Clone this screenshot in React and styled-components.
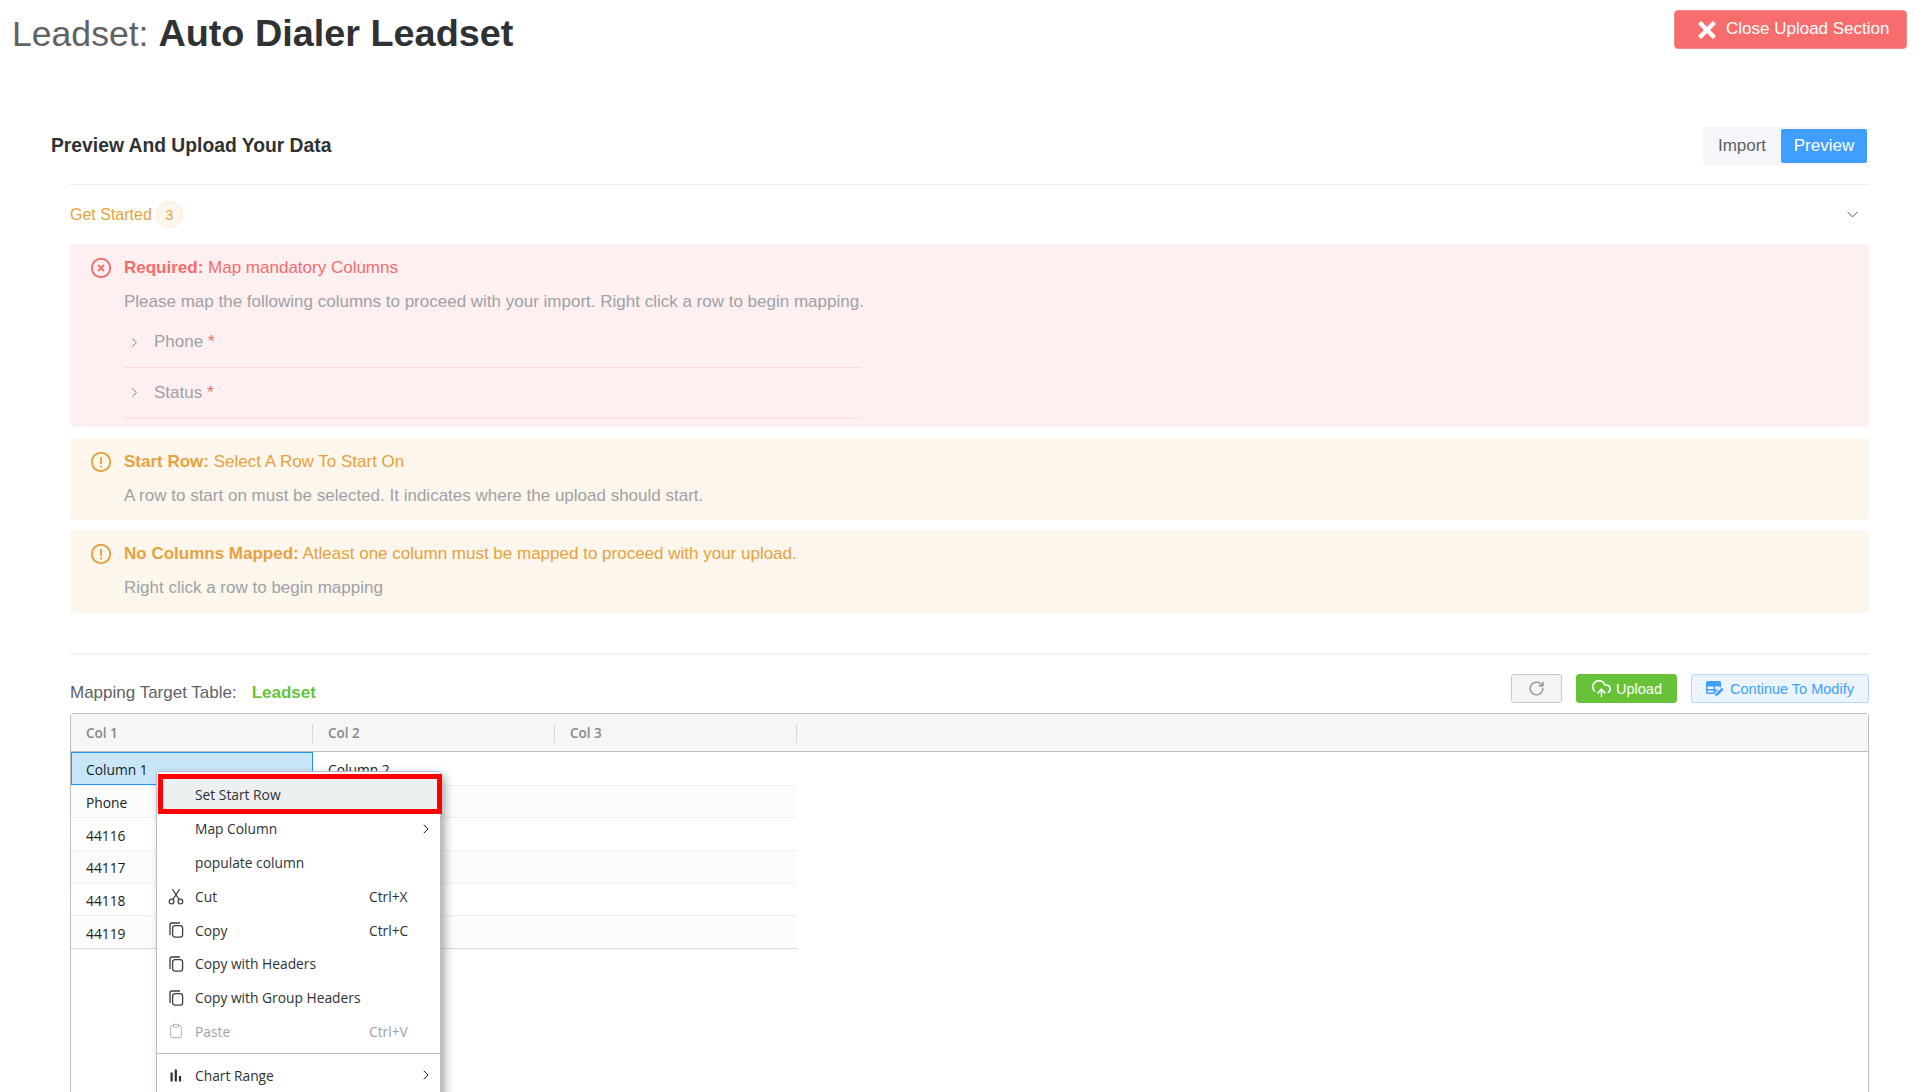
import React from 'react';
import styled, { createGlobalStyle } from 'styled-components';
import { ChevronDown, ChevronRight, CloudUpload, Clipboard, RotateCw } from 'lucide-react';

const GlobalStyle = createGlobalStyle`
  html, body {
    margin: 0;
    padding: 0;
    background: #fff;
    overflow: hidden;
  }
  * {
    box-sizing: border-box;
  }
`;

const TONES = {
  danger: { bg: '#fef0f0', fg: '#f56c6c' },
  warning: { bg: '#fdf6ec', fg: '#e6a23c' },
};

const Page = styled.div`
  width: 1914px;
  height: 1092px;
  overflow: hidden;
  font-family: "Liberation Sans", Arial, sans-serif;
  color: #303133;
`;

const TopBar = styled.header`
  display: flex;
  justify-content: space-between;
  align-items: flex-start;
  height: 127px;
  padding: 11px 7px 0 12px;
`;

const Title = styled.h1`
  margin: 0;
  font-size: 35.6px;
  line-height: 44px;
  font-weight: 400;
  color: #606266;

  strong {
    font-size: 37.8px;
    font-weight: 700;
    color: #303133;
  }
`;

const CloseButton = styled.button`
  display: flex;
  align-items: center;
  gap: 10px;
  width: 233px;
  height: 39px;
  margin-top: -1px;
  padding: 0 0 2px 23px;
  border: 1px solid #f78989;
  border-radius: 4px;
  background: #f76d6d;
  color: #fff;
  font: 17px "Liberation Sans", Arial, sans-serif;

  svg {
    margin-top: 2px;
  }
`;

const Section = styled.section`
  padding: 0 45px 0 51px;
`;

const SectionHead = styled.div`
  display: flex;
  justify-content: space-between;
  align-items: center;
  height: 38px;
  padding-right: 2px;
`;

const SectionTitle = styled.h2`
  margin: 0;
  font-size: 19.3px;
  font-weight: 700;
  color: #303133;
`;

const Toggle = styled.div`
  display: flex;
  align-items: center;
  height: 38px;
  border-radius: 4px;
  background: #f4f6fa;
  padding: 2px 0 2px 0;
`;

const ToggleItem = styled.div`
  display: flex;
  align-items: center;
  justify-content: center;
  height: 34px;
  width: ${p => (p.$active ? 86 : 78)}px;
  border-radius: 2px;
  font-size: 17px;
  background: ${p => (p.$active ? '#409eff' : 'transparent')};
  color: ${p => (p.$active ? '#fff' : '#606266')};
`;

const Body = styled.div`
  margin-left: 19px;
  margin-top: 19px;
  border-top: 1px solid #ebeef5;
`;

const Collapse = styled.div`
  display: flex;
  align-items: center;
  justify-content: space-between;
  height: 59px;
  padding: 0 7px 0 0;
  color: #e6a23c;
  font-size: 16px;
`;

const CollapseLabel = styled.div`
  display: flex;
  align-items: center;
  gap: 4px;
`;

const CountBadge = styled.span`
  display: flex;
  align-items: center;
  justify-content: center;
  width: 27px;
  height: 27px;
  border: 1px solid #faecd8;
  border-radius: 50%;
  background: #fdf6ec;
  font-size: 14px;
`;

const AlertStack = styled.div`
  display: flex;
  flex-direction: column;
  gap: 10.5px;
`;

const Alert = styled.div`
  padding: 12px 0 ${p => p.$pad || 12}px 54px;
  border-radius: 4px;
  background: ${p => TONES[p.$tone].bg};
  color: ${p => TONES[p.$tone].fg};
`;

const AlertTitle = styled.div`
  position: relative;
  height: 24px;
  font-size: 17px;
  line-height: 24px;

  svg {
    position: absolute;
    left: -34px;
    top: 1px;
  }
  b {
    font-weight: 700;
  }
`;

const AlertText = styled.div`
  margin-top: 10px;
  font-size: 17px;
  line-height: 24px;
  color: #a0a1a6;
`;

const MappingList = styled.div`
  width: 737px;
  margin-top: 3px;
`;

const MappingRow = styled.div`
  display: flex;
  align-items: center;
  gap: 12px;
  height: 51px;
  padding: 0 0 0 3px;
  border-bottom: ${p => (p.$last ? 2 : 1)}px solid ${p => (p.$last ? '#fde2e2' : '#fbd9d9')};
  color: #a0a1a6;
  font-size: 17px;

  em {
    font-style: normal;
    color: #f56c6c;
  }
`;

const Rule = styled.div`
  height: 2px;
  margin-top: 40px;
  background: #f1f2f6;
`;

const GridBar = styled.div`
  display: flex;
  align-items: center;
  height: 58px;
  padding-top: 18px;
  font-size: 17px;
  color: #606266;
`;

const TargetName = styled.b`
  margin-left: 15px;
  color: #67c23a;
`;

const BarActions = styled.div`
  display: flex;
  gap: 14px;
  margin-left: auto;
  margin-top: -9px;
`;

const ActionButton = styled.button`
  display: flex;
  align-items: center;
  justify-content: center;
  gap: ${p => p.$gap || 4}px;
  width: ${p => p.$width}px;
  height: 29px;
  padding: 0;
  border-radius: 3px;
  border: 1px solid ${p => p.$border};
  background: ${p => p.$bg};
  color: ${p => p.$color};
  font: 14.5px "Liberation Sans", Arial, sans-serif;
`;

const GridWrap = styled.div`
  position: relative;
`;

const Grid = styled.div`
  height: 500px;
  border: 1px solid #babfc7;
  border-radius: 3px 3px 0 0;
  font-family: "Open Sans", sans-serif;
  font-size: 13.8px;
  color: #181d1f;
`;

const GridHeader = styled.div`
  display: flex;
  height: 38px;
  background: #f5f7f7;
  border-bottom: 1px solid #babfc7;
`;

const HeaderCell = styled.div`
  position: relative;
  display: flex;
  align-items: center;
  width: 242px;
  padding: 1px 0 0 15px;
  font-weight: 600;
  font-size: 13.5px;
  color: #87898a;

  &::after {
    content: '';
    position: absolute;
    right: 0;
    top: 10px;
    height: 19px;
    width: 1px;
    background: #d5d8db;
  }
`;

const Rows = styled.div`
  width: 726px;
  border-bottom: 1px solid #d5d8dd;
`;

const Row = styled.div`
  display: flex;
  height: 32.67px;
  border-top: 1px solid ${p => (p.$first ? 'transparent' : '#eff0f2')};
  background: ${p => (p.$odd ? '#fcfcfd' : '#fff')};
`;

const Cell = styled.div`
  display: flex;
  align-items: center;
  width: 243px;
  padding: 2px 0 0 15px;
`;

const SelectedCell = styled(Cell)`
  width: 242px;
  margin-top: -1px;
  padding: 3px 0 0 14px;
  border: 1px solid #2196f3;
  background: #c9e6f9;
`;

const Menu = styled.div`
  position: absolute;
  left: 86px;
  top: 58px;
  width: 285px;
  padding: 6px 0;
  border: 1px solid #babfc7;
  border-radius: 3px;
  background: #fff;
  box-shadow: 4px 4px 10px rgba(60, 66, 72, 0.45);
  font-family: "Open Sans", sans-serif;
  font-size: 13.8px;
  color: #181d1f;
`;

const MenuItem = styled.div`
  display: flex;
  align-items: center;
  height: 33.8px;
  padding-left: 11px;
  color: ${p => (p.$disabled ? '#9da2a6' : '#2d3236')};
  background: ${p => (p.$active ? '#ecf0f1' : 'transparent')};
`;

const MenuIcon = styled.span`
  display: flex;
  align-items: center;
  justify-content: center;
  width: 16px;
  margin-right: 11px;
`;

const MenuLabel = styled.span`
  flex: 1;
`;

const MenuKey = styled.span`
  width: 71px;
`;

const MenuArrow = styled.span`
  display: flex;
  width: 22px;
`;

const MenuSeparator = styled.div`
  height: 1px;
  margin: 5px 0 4px;
  background: #babfc7;
`;

const RedBox = styled.div`
  position: absolute;
  left: 88px;
  top: 61px;
  width: 284px;
  height: 40px;
  border: 5px solid #f00;
  pointer-events: none;
`;

const CloseIcon = () => (
  <svg width="18" height="18" viewBox="0 0 18 18">
    <path d="M1.5 1.500 16.500 16.500M16.500 1.500 1.500 16.500" stroke="#fff" strokeWidth="4.400" fill="none" />
  </svg>
);

const ErrorIcon = () => (
  <svg width="22" height="22" viewBox="0 0 22 22" fill="none" stroke="#f56c6c">
    <circle cx="11" cy="11" r="9.200" strokeWidth="1.900" />
    <path d="M8 8l6 6M14 8l-6 6" strokeWidth="1.900" />
  </svg>
);

const WarnIcon = () => (
  <svg width="22" height="22" viewBox="0 0 22 22" fill="none" stroke="#e6a23c">
    <circle cx="11" cy="11" r="9.200" strokeWidth="1.900" />
    <path d="M11 6v7M11 14.600v1.800" strokeWidth="1.900" />
  </svg>
);

const ModifyIcon = () => (
  <svg width="18" height="16" viewBox="0 0 18 16" fill="#409eff">
    <path d="M1.500 0h12A1.500 1.500 0 0 1 15 1.500V6l-1.300 1V5.500H9v3h3.500l-3.500 3V13H1.500A1.500 1.500 0 0 1 0 11.500v-10A1.500 1.500 0 0 1 1.500 0ZM1.500 5.500v2.500h6V5.500Zm0 4v2h6v-2Z" />
    <path d="M15.800 6.800 17.600 8.600 11.800 14.400 9 15.200 9.800 12.400Z" />
  </svg>
);

const CutIcon = () => (
  <svg width="16" height="17" viewBox="0 0 16 17" fill="none" stroke="#3a3f43" strokeWidth="1.200">
    <circle cx="3.600" cy="13.600" r="2.400" />
    <circle cx="12.400" cy="13.600" r="2.400" />
    <path d="M4.900 11.600 11.600 1M11.100 11.600 4.400 1" />
  </svg>
);

const CopyIcon = () => (
  <svg width="15" height="16" viewBox="0 0 15 16" fill="none" stroke="#3a3f43" strokeWidth="1.300">
    <path d="M1 13V3a2 2 0 0 1 2-2h8" />
    <rect x="3.600" y="3.600" width="10" height="11.500" rx="2.400" />
  </svg>
);

const ChartIcon = () => (
  <svg width="12" height="13" viewBox="0 0 12 13" fill="#2d3236">
    <rect x="0.500" y="3.500" width="2.200" height="9" />
    <rect x="4.700" y="0.500" width="2.200" height="12" />
    <rect x="8.900" y="7" width="2.200" height="5.500" />
  </svg>
);

const Arrow = () => (
  <MenuArrow>
    <ChevronRight size={16} strokeWidth={1.5} color="#181d1f" />
  </MenuArrow>
);

const ROWS = ['Phone', '44116', '44117', '44118', '44119'];

export default function App() {
  return (
    <Page>
      <GlobalStyle />
      <TopBar>
        <Title>Leadset: <strong>Auto Dialer Leadset</strong></Title>
        <CloseButton><CloseIcon />Close Upload Section</CloseButton>
      </TopBar>
      <Section>
        <SectionHead>
          <SectionTitle>Preview And Upload Your Data</SectionTitle>
          <Toggle>
            <ToggleItem>Import</ToggleItem>
            <ToggleItem $active>Preview</ToggleItem>
          </Toggle>
        </SectionHead>
        <Body>
          <Collapse>
            <CollapseLabel>Get Started <CountBadge>3</CountBadge></CollapseLabel>
            <ChevronDown size={19} strokeWidth={1.2} color="#4a4d52" />
          </Collapse>
          <AlertStack>
            <Alert $tone="danger" $pad={8}>
              <AlertTitle><ErrorIcon /><b>Required:</b> Map mandatory Columns</AlertTitle>
              <AlertText>Please map the following columns to proceed with your import. Right click a row to begin mapping.</AlertText>
              <MappingList>
                <MappingRow>
                  <ChevronRight size={15} strokeWidth={1.6} color="#77787d" />
                  <span>Phone <em>*</em></span>
                </MappingRow>
                <MappingRow $last>
                  <ChevronRight size={15} strokeWidth={1.6} color="#77787d" />
                  <span>Status <em>*</em></span>
                </MappingRow>
              </MappingList>
            </Alert>
            <Alert $tone="warning">
              <AlertTitle><WarnIcon /><b>Start Row:</b> Select A Row To Start On</AlertTitle>
              <AlertText>A row to start on must be selected. It indicates where the upload should start.</AlertText>
            </Alert>
            <Alert $tone="warning" $pad={13}>
              <AlertTitle><WarnIcon /><b>No Columns Mapped:</b> Atleast one column must be mapped to proceed with your upload.</AlertTitle>
              <AlertText>Right click a row to begin mapping</AlertText>
            </Alert>
          </AlertStack>
          <Rule />
          <GridBar>
            Mapping Target Table: <TargetName>Leadset</TargetName>
            <BarActions>
              <ActionButton $width={51} $border="#c8c9cc" $bg="#f4f4f5" $color="#909399">
                <RotateCw size={17} strokeWidth={2} />
              </ActionButton>
              <ActionButton $width={101} $border="#67c23a" $bg="#67c23a" $color="#fff">
                <CloudUpload size={21} strokeWidth={1.8} />Upload
              </ActionButton>
              <ActionButton $width={178} $gap={6} $border="#b3d8ff" $bg="#ecf5ff" $color="#409eff">
                <ModifyIcon />Continue To Modify
              </ActionButton>
            </BarActions>
          </GridBar>
          <GridWrap>
            <Grid>
              <GridHeader>
                <HeaderCell>Col 1</HeaderCell>
                <HeaderCell>Col 2</HeaderCell>
                <HeaderCell>Col 3</HeaderCell>
              </GridHeader>
              <Rows>
                <Row $first>
                  <SelectedCell>Column 1</SelectedCell>
                  <Cell>Column 2</Cell>
                </Row>
                {ROWS.map((value, i) => (
                  <Row key={value} $odd={i % 2 === 0}>
                    <Cell>{value}</Cell>
                  </Row>
                ))}
              </Rows>
            </Grid>
            <Menu>
              <MenuItem $active><MenuIcon /><MenuLabel>Set Start Row</MenuLabel></MenuItem>
              <MenuItem><MenuIcon /><MenuLabel>Map Column</MenuLabel><Arrow /></MenuItem>
              <MenuItem><MenuIcon /><MenuLabel>populate column</MenuLabel></MenuItem>
              <MenuItem>
                <MenuIcon><CutIcon /></MenuIcon>
                <MenuLabel>Cut</MenuLabel><MenuKey>Ctrl+X</MenuKey>
              </MenuItem>
              <MenuItem>
                <MenuIcon><CopyIcon /></MenuIcon>
                <MenuLabel>Copy</MenuLabel><MenuKey>Ctrl+C</MenuKey>
              </MenuItem>
              <MenuItem><MenuIcon><CopyIcon /></MenuIcon><MenuLabel>Copy with Headers</MenuLabel></MenuItem>
              <MenuItem><MenuIcon><CopyIcon /></MenuIcon><MenuLabel>Copy with Group Headers</MenuLabel></MenuItem>
              <MenuItem $disabled>
                <MenuIcon><Clipboard size={16} strokeWidth={1.2} color="#9da2a6" /></MenuIcon>
                <MenuLabel>Paste</MenuLabel><MenuKey>Ctrl+V</MenuKey>
              </MenuItem>
              <MenuSeparator />
              <MenuItem><MenuIcon><ChartIcon /></MenuIcon><MenuLabel>Chart Range</MenuLabel><Arrow /></MenuItem>
            </Menu>
            <RedBox />
          </GridWrap>
        </Body>
      </Section>
    </Page>
  );
}
